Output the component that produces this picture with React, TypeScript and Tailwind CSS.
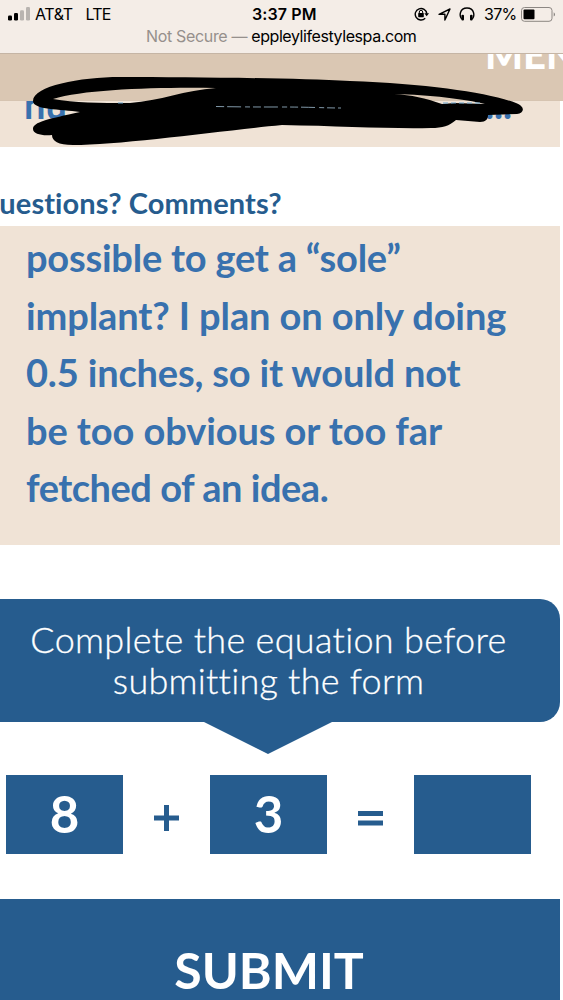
const messageLines = [
  { text: 'possible to get a “sole”', style: 'tracking-[-0.22px]' },
  { text: 'implant? I plan on only doing', style: 'tracking-[-0.11px]' },
  { text: '0.5 inches, so it would not', style: 'tracking-[-0.17px]' },
  { text: 'be too obvious or too far', style: 'tracking-[-0.08px]' },
  { text: 'fetched of an idea.', style: 'tracking-[-0.48px]' },
];

function SignalBars() {
  return (
    <svg width="22" height="14" viewBox="0 0 22 14" className="shrink-0">
      <rect x="0" y="8.5" width="4" height="5" rx="1.3" fill="#000" />
      <rect x="6" y="6" width="4" height="7.5" rx="1.3" fill="#000" />
      <rect x="12" y="3.2" width="4" height="10.3" rx="1.3" fill="#b9b4b0" />
      <rect x="18" y="0" width="4" height="13.5" rx="1.3" fill="#b9b4b0" />
    </svg>
  );
}

function RotationLock() {
  return (
    <svg width="15" height="14" viewBox="0 0 15 14" fill="none" className="shrink-0">
      <path d="M11.2 11.3A5.8 5.8 0 1 1 12.8 6.6" stroke="#000" strokeWidth="1.4" />
      <path d="M10.3 6.2h4.7l-2.3 3z" fill="#000" />
      <rect x="4.2" y="6" width="5.6" height="4.2" rx="0.6" fill="#000" />
      <path d="M5.3 6.3V5a1.7 1.7 0 0 1 3.4 0v1.3" stroke="#000" strokeWidth="1" />
    </svg>
  );
}

function LocationArrow() {
  return (
    <svg width="13" height="13" viewBox="0 0 13 13" fill="none" className="shrink-0">
      <path d="M1 6.3 12 1 6.9 12V6.3Z" stroke="#000" strokeWidth="1.4" strokeLinejoin="round" />
    </svg>
  );
}

function Headphones() {
  return (
    <svg width="16" height="14" viewBox="0 0 16 14" fill="none" className="shrink-0">
      <path d="M2.7 12C.2 9.2 .3 1 8 1s7.8 8.2 5.3 11" stroke="#000" strokeWidth="1.4" />
      <rect x="2.4" y="7.7" width="2.6" height="5.8" rx="1.1" fill="#000" />
      <rect x="11" y="7.7" width="2.6" height="5.8" rx="1.1" fill="#000" />
    </svg>
  );
}

function Battery() {
  return (
    <svg width="35" height="15" viewBox="0 0 35 15" fill="none" className="shrink-0">
      <rect x="0.5" y="0.5" width="30.5" height="13.8" rx="3" stroke="#8c8783" />
      <rect x="2.5" y="2.5" width="11" height="9.8" rx="1" fill="#000" />
      <path d="M32.7 5.2c1.8.8 1.8 3.6 0 4.4z" fill="#8c8783" />
    </svg>
  );
}

function BrowserHeader() {
  return (
    <header className="h-[54px] border-b border-[#c5b5a5] bg-[#f4ede7] font-['Inter',sans-serif] text-black">
      <div className="grid h-[28px] grid-cols-[252px_66px_1fr] items-center text-[16px]">
        <div className="flex items-center pl-2">
          <SignalBars />
          <span className="ml-[5px] tracking-[-0.4px]">AT&amp;T</span>
          <span className="ml-[13px] tracking-[-0.8px]">LTE</span>
        </div>
        <span className="whitespace-nowrap font-semibold tracking-[0.1px]">3:37 PM</span>
        <div className="flex items-center pl-[96px]">
          <RotationLock />
          <span className="ml-[9px] flex"><LocationArrow /></span>
          <span className="ml-[8px] flex"><Headphones /></span>
          <span className="ml-[9px] w-[33px] whitespace-nowrap tracking-[-0.7px]">37%</span>
          <span className="ml-[4px] flex"><Battery /></span>
        </div>
      </div>
      <div className="flex h-[16px] items-center whitespace-nowrap pl-[146px] text-[16px]">
        <span className="tracking-[-0.33px] text-[#96908c]">Not Secure —</span>
        <span className="ml-1 tracking-[-0.42px]">eppleylifestylespa.com</span>
      </div>
    </header>
  );
}

function Scribble() {
  return (
    <svg width="563" height="160" viewBox="0 0 563 160" className="pointer-events-none absolute left-0 top-0">
      <path
        d="M33 101C33 86 80 77 120 77C190 77 290 78 350 81C430 84 490 93 516 103C526 107 524 113 517 114L488 115C488 119 486 122 480 122L456 120C449 126 443 128 431 128C390 129 340 126 282 125C220 131 120 145 73 145C58 145 52 141 52 135C42 136 33 134 33 129C33 122 48 119 80 112C60 109 33 110 33 101ZM53 99C75 103 98 103 130 103C160 101 185 90 216 88C160 87 85 89 53 99ZM394 94C412 95 425 98 442 104L455 103L485 104C465 99 430 95 394 94Z"
        fill="#000"
        fillRule="evenodd"
      />
      <path d="M216 106.5C240 107 260 107 282 107C310 107 325 108 341 108" stroke="#8fa9bb" strokeWidth="0.9" strokeDasharray="8 3 14 4 5 3" fill="none" />
      <path d="M118 103h7M443 103h38" stroke="#6ba3cb" strokeWidth="1.2" strokeDasharray="5 3" />
    </svg>
  );
}

function NumberBox({ value }: { value: string }) {
  return (
    <div className="flex h-[79px] w-[117px] items-center justify-center bg-[#265c8e] pb-[3px] text-[51px] font-bold leading-none text-white">
      {value}
    </div>
  );
}

export default function App() {
  return (
    <main className="relative h-[1000px] w-[563px] overflow-hidden bg-white font-['Lato',sans-serif] [font-variant-ligatures:none]">
      <BrowserHeader />
      <nav className="flex h-[47px] overflow-hidden border-b border-[#d6c4b1] bg-[#dac7b3] pl-[485px]">
        <span className="-mt-[25px] whitespace-nowrap text-[40px] font-black leading-[50px] text-white">MEN</span>
      </nav>
      <div className="flex h-[46px] w-[560px] items-start justify-between overflow-hidden bg-[#f0e3d6] pl-6 pr-[48px] text-[38px] font-bold leading-[46px] text-[#3871ae]">
        <span className="-mt-[20px]">nu</span>
        <span className="-mt-[20px]">...</span>
      </div>

      <div className="flex h-[79px] items-end">
        <h2 className="-ml-[24px] whitespace-nowrap pb-[4px] text-[29px] font-bold leading-[38px] tracking-[0.1px] text-[#265c8e]">Questions? Comments?</h2>
      </div>
      <div className="h-[319px] w-[560px] bg-[#f0e3d6] pl-[26px] pt-[3px] text-[38px] font-bold leading-[57.5px] text-[#3871ae]">
        {messageLines.map((line) => (
          <div key={line.text} className="whitespace-nowrap"><span className={line.style}>{line.text}</span></div>
        ))}
      </div>

      <section className="mt-[54px] w-[560px]">
        <div className="flex h-[123px] flex-col items-center rounded-r-[20px] bg-[#265c8e] pr-[23px] pt-[20px] text-[36px] font-light leading-[40.5px] text-white [-webkit-text-stroke:0.3px_white]">
          <span className="whitespace-nowrap tracking-[0.32px]">Complete the equation before</span>
          <span className="whitespace-nowrap tracking-[0.25px]">submitting the form</span>
        </div>
        <svg width="128" height="32" viewBox="0 0 128 32" className="ml-[204px] block">
          <path d="M0 0H128L64 32Z" fill="#265c8e" />
        </svg>
      </section>

      <div className="mt-[21px] grid grid-cols-[117px_87px_117px_87px_117px] pl-[6px]">
        <NumberBox value="8" />
        <span className="flex items-center justify-center pt-[7px] text-[#265c8e]">
          <svg width="25" height="26"><path d="M12.5 0V26M0 13H25" stroke="currentColor" strokeWidth="5" /></svg>
        </span>
        <NumberBox value="3" />
        <span className="flex items-center justify-center pt-[7px] text-[#265c8e]">
          <svg width="25" height="15"><path d="M0 2.5H25M0 12H25" stroke="currentColor" strokeWidth="5" /></svg>
        </span>
        <NumberBox value="" />
      </div>

      <button className="mt-[45px] flex h-[145px] w-[560px] items-center justify-center bg-[#265c8e] pr-[22px] pb-[3px] text-[50px] font-bold leading-none text-white">
        SUBMIT
      </button>
      <Scribble />
    </main>
  );
}
